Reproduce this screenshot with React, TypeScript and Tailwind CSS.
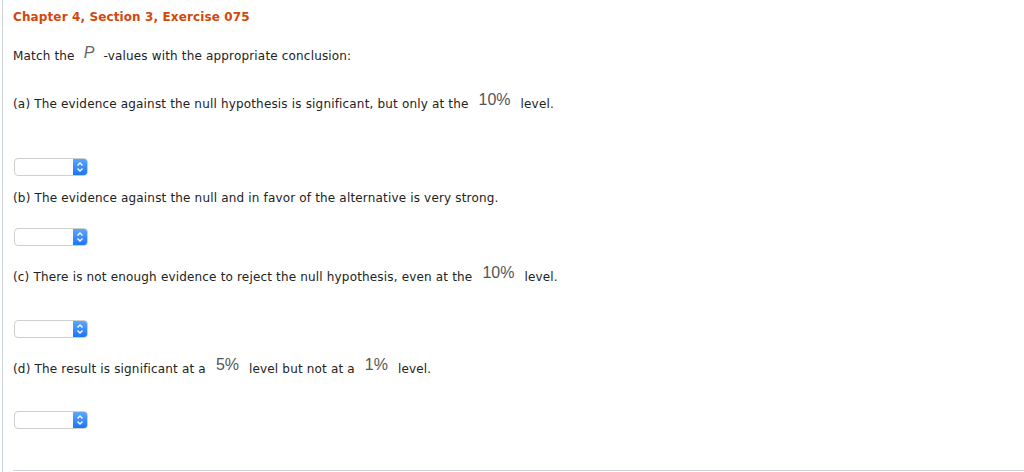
const Select = ({ className }: { className: string }) => (
  <div className={`ml-[1px] flex h-[18px] w-[74px] overflow-hidden rounded-[4px] border border-[#cfcfcf] bg-white ${className}`}>
    <div className="flex-1" />
    <div className="flex w-[14px] items-center justify-center bg-gradient-to-b from-[#5ca6ff] to-[#1b75f6]">
      <svg width="8" height="12" viewBox="0 0 8 12" fill="none" stroke="white" strokeWidth="1.3">
        <path d="M1.5 4.5 L4 2 L6.5 4.5" />
        <path d="M1.5 7.5 L4 10 L6.5 7.5" />
      </svg>
    </div>
  </div>
);

const Val = ({ children }: { children: string }) => (
  <span className="mx-[6px] align-[3px] font-['Liberation_Sans',sans-serif] text-[16px] font-light tracking-normal text-[#555]">
    {children}
  </span>
);

export default function App() {
  return (
    <div className="h-[472px] w-[1024px] overflow-hidden bg-white">
      <div className="ml-[2px] flex h-full flex-col border-l border-[#ccd3dd] pt-[7px] pl-[10px] font-['DejaVu_Sans',Verdana,sans-serif] text-[12px] tracking-[0.17px] text-[#222]">
        <h1 className="h-[20px] leading-[20px] text-[12px] font-bold tracking-[0.12px] text-[#d2480a]">
          Chapter 4, Section 3, Exercise 075
        </h1>
        <p className="mt-[16px] h-[20px] leading-[20px]">
          Match the
          <span className="mx-[9px] align-[2px] font-['Liberation_Sans',sans-serif] text-[16px] italic font-light text-[#666]">P</span>
          -values with the appropriate conclusion:
        </p>
        <p className="mt-[27px] h-[20px] leading-[20px]">
          (a) The evidence against the null hypothesis is significant, but only at the <Val>10%</Val> level.
        </p>
        <Select className="mt-[48px]" />
        <p className="mt-[12px] h-[20px] leading-[20px]">
          (b) The evidence against the null and in favor of the alternative is very strong.
        </p>
        <Select className="mt-[20px]" />
        <p className="mt-[17px] h-[20px] leading-[20px]">
          (c) There is not enough evidence to reject the null hypothesis, even at the <Val>10%</Val> level.
        </p>
        <Select className="mt-[37px]" />
        <p className="mt-[17px] h-[20px] leading-[20px]">
          (d) The result is significant at a <Val>5%</Val> level but not at a <Val>1%</Val> level.
        </p>
        <Select className="mt-[36px]" />
        <div className="mt-[41px] border-t border-[#ccd3dd]" />
      </div>
    </div>
  );
}
